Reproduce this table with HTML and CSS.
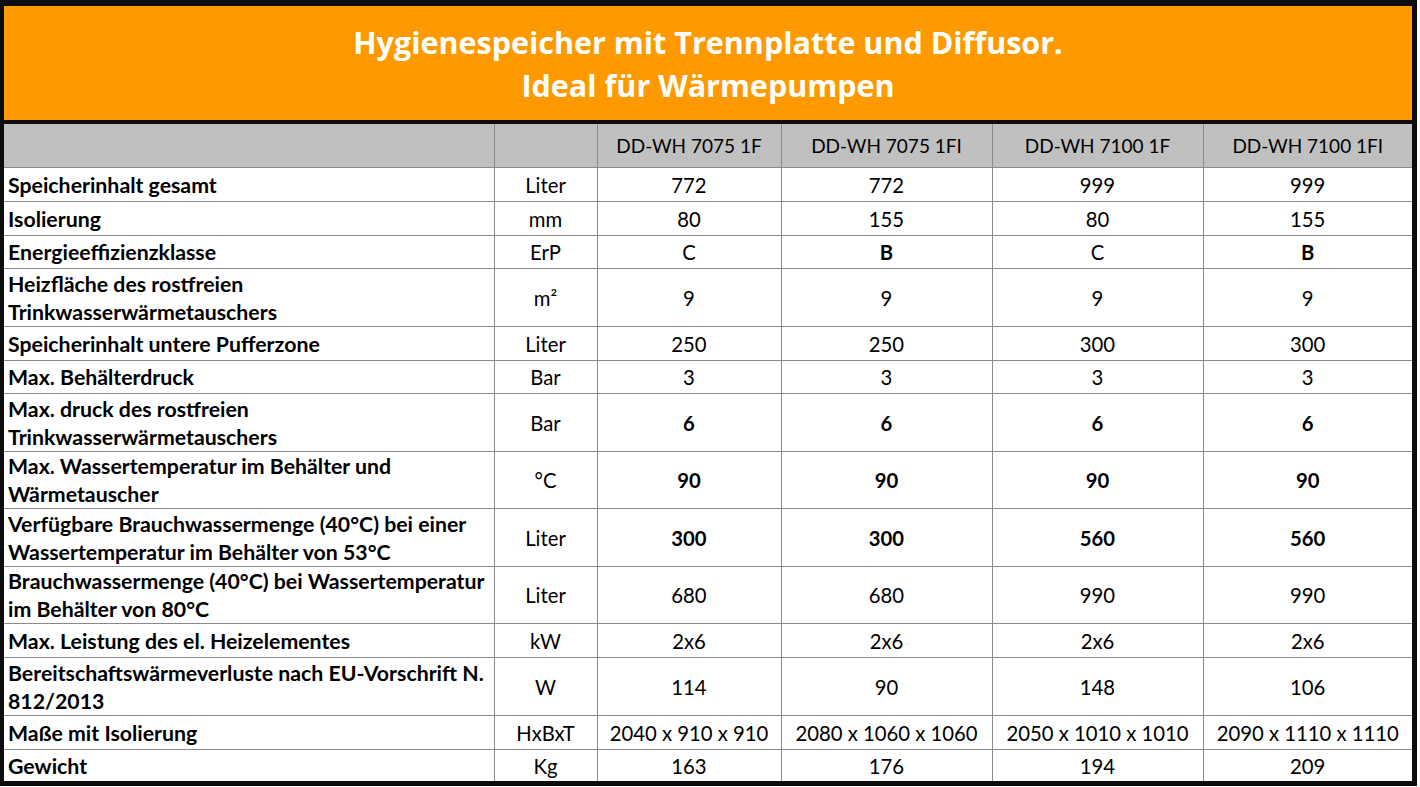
FILE: index.html
```html
<!DOCTYPE html>
<html lang="de">
<head>
<meta charset="utf-8">
<title>Hygienespeicher</title>
<link rel="stylesheet" href="styles.css">
</head>
<body>
<div class="sheet">
  <div class="banner">
    <div>Hygienespeicher mit Trennplatte und Diffusor.</div>
    <div>Ideal für Wärmepumpen</div>
  </div>
  <table class="spec">
    <colgroup>
      <col class="c-label"><col class="c-unit"><col class="c-a"><col class="c-b"><col class="c-c"><col class="c-d">
    </colgroup>
    <thead>
      <tr class="r-head"><th></th><th></th><th>DD-WH 7075 1F</th><th>DD-WH 7075 1FI</th><th>DD-WH 7100 1F</th><th>DD-WH 7100 1FI</th></tr>
    </thead>
    <tbody>
      <tr class="r1"><td class="lbl">Speicherinhalt gesamt</td><td>Liter</td><td>772</td><td>772</td><td>999</td><td>999</td></tr>
      <tr class="r1"><td class="lbl">Isolierung</td><td>mm</td><td>80</td><td>155</td><td>80</td><td>155</td></tr>
      <tr class="r1 short"><td class="lbl">Energieeffizienzklasse</td><td>ErP</td><td>C</td><td class="b">B</td><td>C</td><td class="b">B</td></tr>
      <tr class="r2"><td class="lbl">Heizfläche des rostfreien<br>Trinkwasserwärmetauschers</td><td>m²</td><td>9</td><td>9</td><td>9</td><td>9</td></tr>
      <tr class="r1"><td class="lbl">Speicherinhalt untere Pufferzone</td><td>Liter</td><td>250</td><td>250</td><td>300</td><td>300</td></tr>
      <tr class="r1 short"><td class="lbl">Max. Behälterdruck</td><td>Bar</td><td>3</td><td>3</td><td>3</td><td>3</td></tr>
      <tr class="r2"><td class="lbl">Max. druck des rostfreien<br>Trinkwasserwärmetauschers</td><td>Bar</td><td class="b">6</td><td class="b">6</td><td class="b">6</td><td class="b">6</td></tr>
      <tr class="r2 short"><td class="lbl">Max. Wassertemperatur im Behälter und<br>Wärmetauscher</td><td>°C</td><td class="b">90</td><td class="b">90</td><td class="b">90</td><td class="b">90</td></tr>
      <tr class="r2"><td class="lbl">Verfügbare Brauchwassermenge (40°C) bei einer<br>Wassertemperatur im Behälter von 53°C</td><td>Liter</td><td class="b">300</td><td class="b">300</td><td class="b">560</td><td class="b">560</td></tr>
      <tr class="r2 short"><td class="lbl">Brauchwassermenge (40°C) bei Wassertemperatur<br>im Behälter von 80°C</td><td>Liter</td><td>680</td><td>680</td><td>990</td><td>990</td></tr>
      <tr class="r1"><td class="lbl">Max. Leistung des el. Heizelementes</td><td>kW</td><td>2x6</td><td>2x6</td><td>2x6</td><td>2x6</td></tr>
      <tr class="r2"><td class="lbl">Bereitschaftswärmeverluste nach EU-Vorschrift N.<br>812/2013</td><td>W</td><td>114</td><td>90</td><td>148</td><td>106</td></tr>
      <tr class="r1"><td class="lbl">Maße mit Isolierung</td><td>HxBxT</td><td>2040 x 910 x 910</td><td>2080 x 1060 x 1060</td><td>2050 x 1010 x 1010</td><td>2090 x 1110 x 1110</td></tr>
      <tr class="r-last"><td class="lbl">Gewicht</td><td>Kg</td><td>163</td><td>176</td><td>194</td><td>209</td></tr>
    </tbody>
  </table>
</div>
</body>
</html>
```

FILE: styles.css
```css
html, body {
  margin: 0;
  padding: 0;
  background: #ffffff;
}

body {
  font-family: Lato, "Open Sans", "Liberation Sans", sans-serif;
  color: #000;
}

.sheet {
  width: 1408px;
  border-style: solid;
  border-color: #0c0c0c;
  border-width: 6px 5px 5px 4px;
  background: #fff;
}

.banner {
  background: #fe9a00;
  color: #ffffff;
  font-family: "Open Sans", Lato, sans-serif;
  font-weight: 700;
  font-size: 30.5px;
  line-height: 43px;
  text-align: center;
  height: 118px;
  box-sizing: border-box;
  padding-top: 15px;
  border-bottom: 4px solid #0c0c0c;
}

.spec {
  width: 1408px;
  border-collapse: collapse;
  table-layout: fixed;
  font-size: 20.3px;
}

.c-label { width: 490px; }
.c-unit { width: 103px; }
.c-a { width: 184px; }
.c-b { width: 211px; }
.c-c { width: 211px; }
.c-d { width: 209px; }

.spec th,
.spec td {
  border: 1px solid #8a8a8a;
  text-align: center;
  vertical-align: middle;
  padding: 0;
  line-height: 28px;
  font-weight: 400;
  white-space: nowrap;
}

.spec tr > :first-child { border-left: none; }
.spec tr > :last-child { border-right: none; }
.spec thead th { border-top: none; }
.spec tbody tr:last-child td { border-bottom: none; }

.r-head th {
  background: #c0c0c0;
  height: 43px;
  font-size: 19px;
}

.r1 td { height: 33px; }
.r2 td { height: 57px; }
.r1.short td { height: 32px; }
.r2.short td { height: 56px; }
.r-last td { height: 31px; }

.spec td.lbl {
  text-align: left;
  font-weight: 700;
  font-size: 21.3px;
  padding-left: 4px;
}

.spec td.b { font-weight: 700; }
```
